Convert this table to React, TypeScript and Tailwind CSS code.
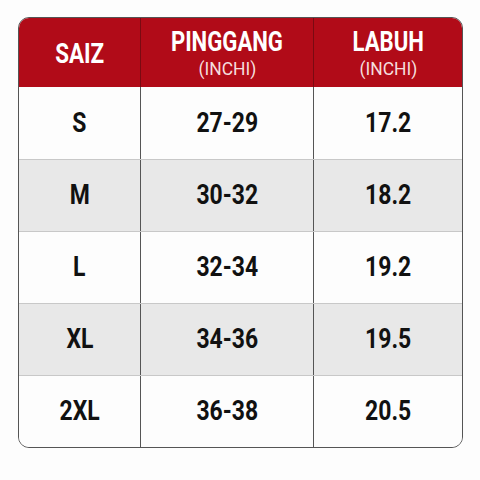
const rows = [
  { size: "S", waist: "27-29", length: "17.2" },
  { size: "M", waist: "30-32", length: "18.2" },
  { size: "L", waist: "32-34", length: "19.2" },
  { size: "XL", waist: "34-36", length: "19.5" },
  { size: "2XL", waist: "36-38", length: "20.5" },
];

export default function App() {
  return (
    <div className="w-[480px] h-[480px] bg-[#fdfdfd] pt-[17px] pl-[18px]" style={{ fontFamily: "Roboto, 'Liberation Sans', sans-serif" }}>
      <div className="w-[445px] rounded-[11px] border border-[#555] overflow-hidden">
        {/* header */}
        <div className="grid grid-cols-[122px_173px_1fr] h-[69px] bg-[#b10b18] text-white font-bold">
          <div className="flex items-center justify-center border-r border-[#7a0a12]">
            <span className="inline-block scale-x-[0.8] text-[28px] leading-none mt-[2px]">SAIZ</span>
          </div>
          <div className="flex flex-col items-center justify-center border-r border-[#7a0a12]">
            <span className="inline-block scale-x-[0.79] text-[28px] leading-none">PINGGANG</span>
            <span className="inline-block scale-x-[0.92] text-[19px] font-normal leading-none mt-[3px] text-[#f5dede]">(INCHI)</span>
          </div>
          <div className="flex flex-col items-center justify-center">
            <span className="inline-block scale-x-[0.79] text-[28px] leading-none">LABUH</span>
            <span className="inline-block scale-x-[0.92] text-[19px] font-normal leading-none mt-[3px] text-[#f5dede]">(INCHI)</span>
          </div>
        </div>
        {rows.map((r, i) => (
          <div
            key={r.size}
            className={`grid grid-cols-[122px_173px_1fr] h-[72px] text-[#111] font-bold ${i % 2 === 1 ? "bg-[#e8e8e8]" : "bg-[#fdfdfd]"} ${i > 0 ? "border-t border-[#c8c8c8]" : ""}`}
          >
            <div className="flex items-center justify-center border-r border-[#555]">
              <span className="inline-block scale-x-[0.85] text-[27px] leading-none">{r.size}</span>
            </div>
            <div className="flex items-center justify-center border-r border-[#555]">
              <span className="inline-block scale-x-[0.85] text-[27px] leading-none">{r.waist}</span>
            </div>
            <div className="flex items-center justify-center">
              <span className="inline-block scale-x-[0.85] text-[27px] leading-none">{r.length}</span>
            </div>
          </div>
        ))}
      </div>
    </div>
  );
}
